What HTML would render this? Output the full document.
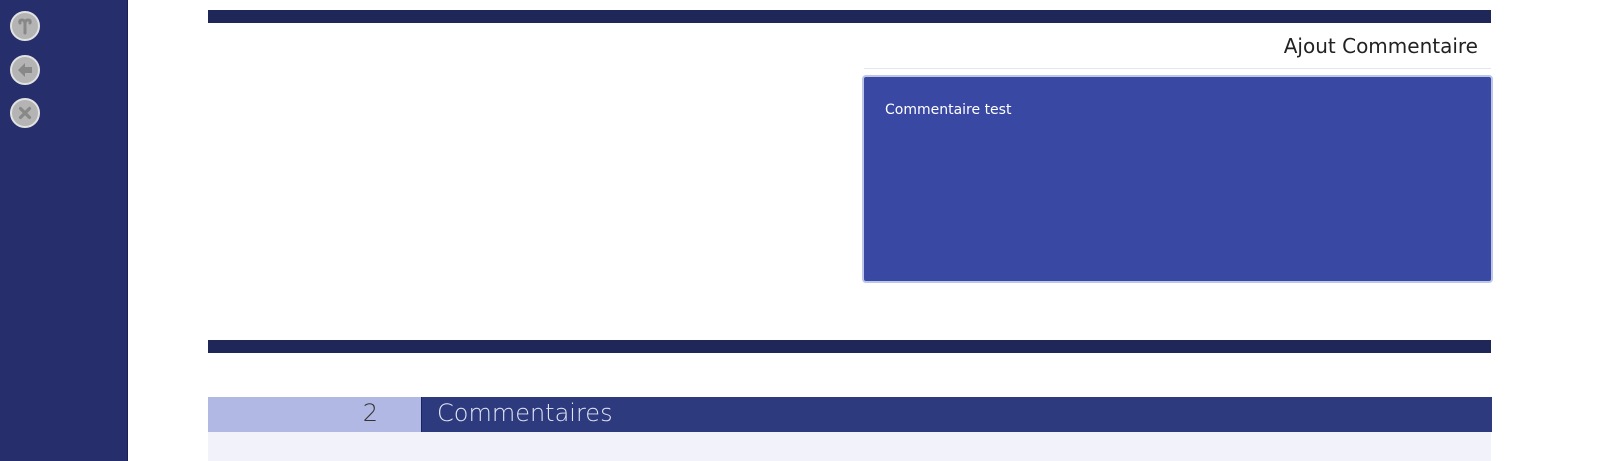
<!DOCTYPE html>
<html><head><style>
body{margin:0;width:1600px;height:461px;overflow:hidden;background:#fff;font-family:"DejaVu Sans","Liberation Sans",sans-serif;position:relative}
.sb{position:absolute;left:0;top:0;width:127px;height:461px;background:#262e6b;border-right:1px solid #1a2050}
.ic{position:absolute;left:11px;width:26px;height:26px;border-radius:50%;background:#b4b4b4;border:2px solid #e2e2e2;box-sizing:content-box;margin-left:-1px}
.ic svg{position:absolute;left:0;top:0}
.bar{position:absolute;left:208px;width:1283px;height:13px;background:#1f2759}
.t{position:absolute;right:122px;top:34px;font-size:20px;color:#222}
.sep{position:absolute;left:864px;top:68px;width:627px;height:1px;background:#e3e7ec}
.ta{position:absolute;left:862px;top:75px;width:627px;height:204px;background:#3949a3;border:2px solid #bcc6e8;border-radius:4px;color:#fff;font-size:14px}
.ta span{position:absolute;left:21px;top:25px}
.l{position:absolute;left:208px;top:397px;width:213px;height:35px;background:#b1b8e3;color:#333;font-size:24px;font-weight:300}
.r{position:absolute;left:421px;top:397px;width:1070px;height:35px;background:#2d3a7e;border-left:1px solid #1a2366;color:#e4e7f7;font-size:24px;font-weight:300}
.f{position:absolute;left:208px;top:432px;width:1283px;height:29px;background:#f2f2fb}
</style></head><body>
<div class="sb">
<div class="ic" style="top:11px"><svg width="26" height="26"><path d="M13 20V11M13 11Q13 7 10 7Q7 7 8 10M13 11Q13 7 16 7Q19 7 18 10" stroke="#888" stroke-width="3" fill="none" stroke-linecap="round"/></svg></div>
<div class="ic" style="top:55px"><svg width="26" height="26"><path d="M6 13L13 6V10H20V16H13V20Z" fill="#888"/></svg></div>
<div class="ic" style="top:98px"><svg width="26" height="26"><path d="M8.5 8.5L17.5 17.5M17.5 8.5L8.5 17.5" stroke="#888" stroke-width="3.2" stroke-linecap="round"/></svg></div>
</div>
<div class="bar" style="top:10px"></div>
<div class="t">Ajout Commentaire</div>
<div class="sep"></div>
<div class="ta"><span>Commentaire test</span></div>
<div class="bar" style="top:340px"></div>
<div class="l"><span style="position:absolute;right:43px;top:2px">2</span></div>
<div class="r"><span style="position:absolute;left:15px;top:2px">Commentaires</span></div>
<div class="f"></div>
</body></html>
